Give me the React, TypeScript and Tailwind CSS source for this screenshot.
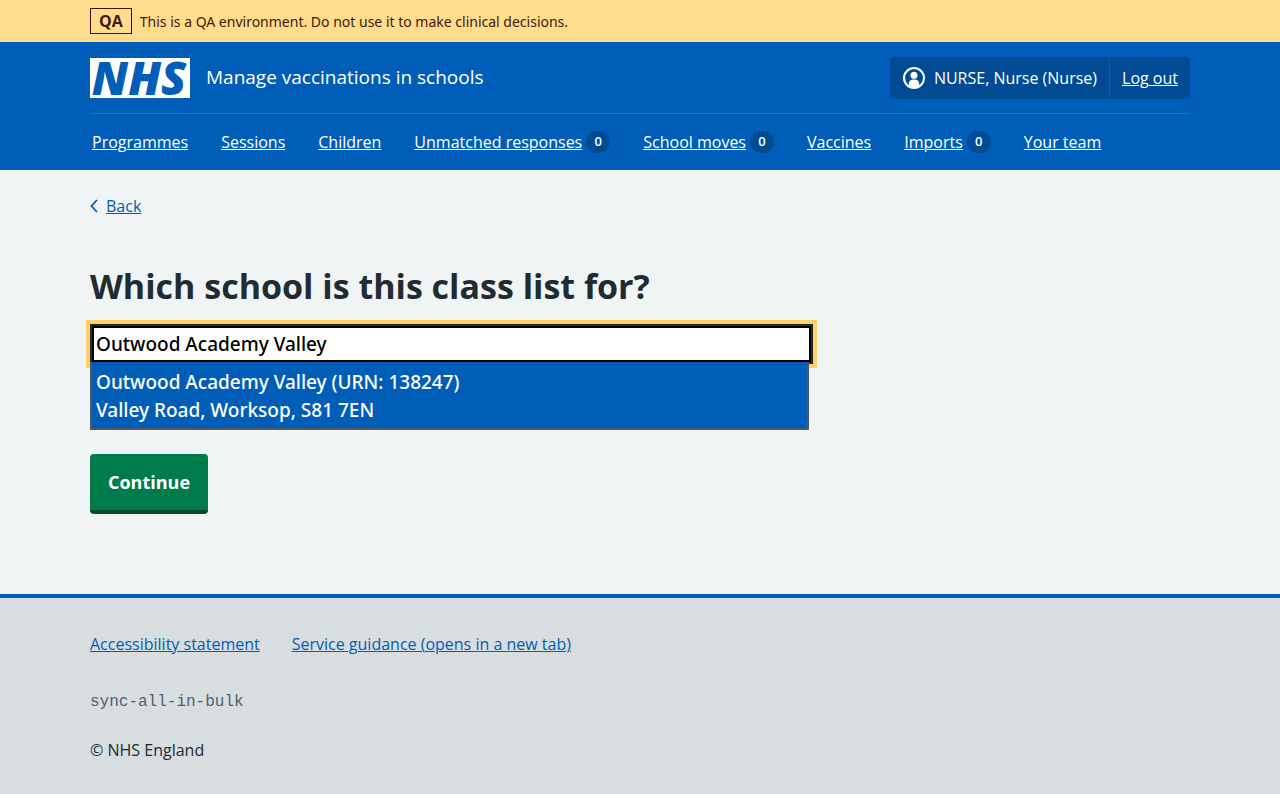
import { useState } from "react";

type NavItem = { label: string; count?: number };

const navItems: NavItem[] = [
  { label: "Programmes" },
  { label: "Sessions" },
  { label: "Children" },
  { label: "Unmatched responses", count: 0 },
  { label: "School moves", count: 0 },
  { label: "Vaccines" },
  { label: "Imports", count: 0 },
  { label: "Your team" },
];

const linkLine = "underline decoration-1 underline-offset-1";

function Logo() {
  return (
    <a
      href="#home"
      aria-label="NHS home"
      className="flex h-10 w-[100px] items-center justify-center bg-white pr-0.5 pb-0.5 text-[46px] leading-10 font-extrabold text-[#005eb8] italic no-underline"
    >
      NHS
    </a>
  );
}

function UserIcon() {
  return (
    <svg viewBox="0 0 24 24" className="size-6 shrink-0" aria-hidden="true">
      <circle cx="12" cy="12" r="10" fill="none" stroke="#fff" strokeWidth="2" />
      <circle cx="12" cy="9.3" r="3.5" fill="#fff" />
      <path d="M6.8 20v-2.2a4.2 4.2 0 0 1 4.2-4.2h2a4.2 4.2 0 0 1 4.2 4.2V20A10 10 0 0 1 12 22a10 10 0 0 1-5.2-2z" fill="#fff" />
    </svg>
  );
}

function EnvironmentBanner() {
  return (
    <div className="bg-[#ffdc8e] px-8 text-[#421b06]">
      <div className="mx-auto flex h-[42px] max-w-[1100px] items-center gap-2">
        <strong className="border border-[#3d1200] px-2 text-base leading-6 font-bold">QA</strong>
        <span className="pt-0.5 font-['Noto_Sans',sans-serif] text-sm">
          This is a QA environment. Do not use it to make clinical decisions.
        </span>
      </div>
    </div>
  );
}

function Header() {
  return (
    <header className="bg-[#005eb8] px-8 text-white">
      <div className="mx-auto max-w-[1100px]">
        <div className="flex items-center justify-between border-b border-[#1f72c1] pt-[15px] pb-3.5">
          <div className="flex items-center gap-4">
            <Logo />
            <span className="pb-0.5 text-[19px] leading-7">Manage vaccinations in schools</span>
          </div>
          <div className="flex h-[42px] items-stretch rounded bg-[#004b93] text-base">
            <div className="flex items-center gap-2 border-r border-[#005eb8] px-3">
              <UserIcon />
              <span>NURSE, Nurse (Nurse)</span>
            </div>
            <a href="#logout" className={`flex items-center px-3 ${linkLine}`}>
              Log out
            </a>
          </div>
        </div>
        <nav aria-label="Menu">
          <ul className="flex h-14 items-center gap-[33px] pl-0.5 text-base">
            {navItems.map(({ label, count }) => (
              <li key={label} className="flex items-center gap-1 whitespace-nowrap">
                <a href="#nav" className={linkLine}>
                  {label}
                </a>
                {count !== undefined && (
                  <span className="flex h-[22px] w-6 items-center justify-center rounded-full bg-[#004b93] text-[13px] font-semibold">
                    {count}
                  </span>
                )}
              </li>
            ))}
          </ul>
        </nav>
      </div>
    </header>
  );
}

function SchoolPicker() {
  const [value, setValue] = useState("Outwood Academy Valley");
  return (
    <div className="max-w-[723px] font-['Noto_Sans',sans-serif] text-[19px] leading-7 font-medium">
      <input
        id="school"
        type="text"
        role="combobox"
        aria-expanded="true"
        aria-controls="school-options"
        value={value}
        onChange={(event) => setValue(event.target.value)}
        className="block h-10 w-full border-2 border-[#212b32] bg-white px-1 text-black shadow-[inset_0_0_0_2px_#000,0_0_0_4px_#ffd06b] outline-none"
      />
      <ul
        id="school-options"
        role="listbox"
        className="relative mr-1 -mt-0.5 border-2 border-t-0 border-[#505a5f] bg-[#005eb8] text-white"
      >
        <li role="option" aria-selected="true" className="px-1 pt-1.5 pb-1">
          Outwood Academy Valley (URN: 138247)
          <br />
          Valley Road, Worksop, S81 7EN
        </li>
      </ul>
    </div>
  );
}

export default function App() {
  return (
    <div className="flex min-h-screen flex-col bg-[#f0f4f5] font-['Open_Sans','Noto_Sans',sans-serif] text-[#212b32]">
      <EnvironmentBanner />
      <Header />
      <main className="px-8">
        <div className="mx-auto max-w-[1100px] pt-6 pb-20">
          <a href="#back" className="inline-flex items-center gap-2 text-base text-[#005eb8]">
            <svg viewBox="0 0 8 14" className="h-3.5 w-2" fill="none" stroke="currentColor" strokeWidth="1.8" aria-hidden="true">
              <path d="M7 1 1.5 7 7 13" />
            </svg>
            <span className={linkLine}>Back</span>
          </a>
          <h1 className="mt-[43px] mb-3.5 text-[34px] leading-[48px] font-bold">
            <label htmlFor="school">Which school is this class list for?</label>
          </h1>
          <SchoolPicker />
          <button
            type="button"
            className="mt-6 h-[60px] rounded border-b-4 border-[#004d26] bg-[#007b4b] px-[18px] text-lg font-bold text-white"
          >
            Continue
          </button>
        </div>
      </main>
      <footer className="grow border-t-4 border-[#005eb8] bg-[#d8dde0] px-8 text-base">
        <div className="mx-auto max-w-[1100px] pt-[34px] pb-8">
          <ul className="flex gap-8 text-[#005eb8]">
            <li>
              <a href="#accessibility" className={linkLine}>Accessibility statement</a>
            </li>
            <li>
              <a href="#guidance" className={linkLine}>Service guidance (opens in a new tab)</a>
            </li>
          </ul>
          <p className="mt-[34px] font-['Liberation_Mono',monospace] text-[#4c6272]">sync-all-in-bulk</p>
          <p className="mt-6">© NHS England</p>
        </div>
      </footer>
    </div>
  );
}
